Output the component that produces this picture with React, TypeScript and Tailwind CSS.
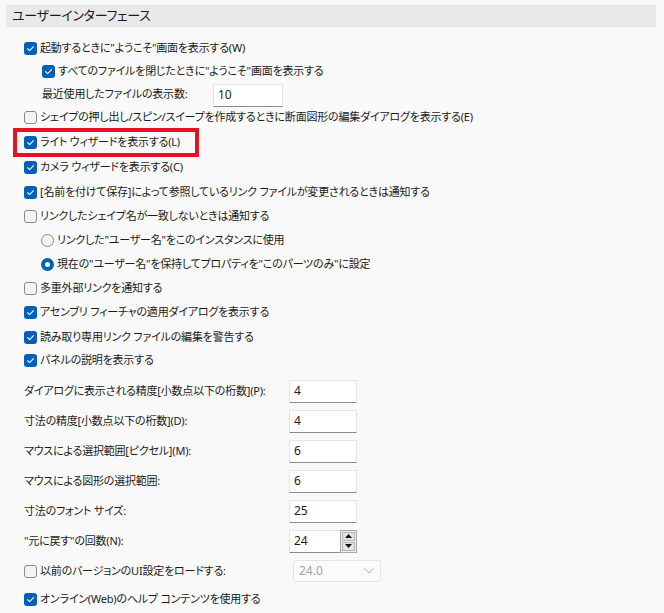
import { FC, ReactNode } from "react";

const FONT =
  "font-['Noto_Sans','Noto_Sans_CJK_JP',sans-serif] [font-feature-settings:'palt']";

type TBoxProps = { checked?: boolean };

const CheckBox: FC<TBoxProps> = ({ checked }) =>
  checked ? (
    <span className="flex h-[13px] w-[13px] shrink-0 items-center justify-center rounded-[3px] bg-[#005fb8]">
      <svg width="13" height="13" viewBox="0 0 13 13" fill="none">
        <path
          d="M3.6 6.7 L5.6 8.7 L9.5 4.6"
          stroke="white"
          strokeWidth="1.1"
          strokeLinecap="round"
          strokeLinejoin="round"
        />
      </svg>
    </span>
  ) : (
    <span className="h-[13px] w-[13px] shrink-0 rounded-[3px] border border-[#8a8a8a] bg-[#f4f4f4]" />
  );

const Radio: FC<TBoxProps> = ({ checked }) =>
  checked ? (
    <span className="flex h-[13px] w-[13px] shrink-0 items-center justify-center rounded-full bg-[#005fb8]">
      <span className="h-[5px] w-[5px] rounded-full bg-white" />
    </span>
  ) : (
    <span className="h-[13px] w-[13px] shrink-0 rounded-full border border-[#8a8a8a] bg-[#f4f4f4]" />
  );

type TRowProps = {
  h: string;
  pl: string;
  children: ReactNode;
};
const Row: FC<TRowProps> = ({ h, pl, children }) => (
  <div className={`relative flex items-center ${h} ${pl}`}>{children}</div>
);

const Check: FC<{ checked?: boolean; label: string }> = ({ checked, label }) => (
  <div className="flex items-center gap-[3px]">
    <CheckBox checked={checked} />
    <span className="whitespace-nowrap">{label}</span>
  </div>
);

const Option: FC<{ checked?: boolean; label: string }> = ({ checked, label }) => (
  <div className="flex items-center gap-[3px]">
    <Radio checked={checked} />
    <span className="whitespace-nowrap">{label}</span>
  </div>
);

const TextBox: FC<{ value: string; w: string }> = ({ value, w }) => (
  <div
    className={`flex h-[23px] ${w} items-center border border-[#e5e5e5] border-b-[#8c8c8c] bg-white pl-[4px] text-[12px] tracking-normal text-[#1b1b1b]`}
  >
    {value}
  </div>
);

const Spinner: FC<{ value: string }> = ({ value }) => (
  <div className="flex h-[23px]">
    <div className="flex h-[23px] w-[51px] items-center border border-r-0 border-[#e5e5e5] border-b-[#8c8c8c] bg-white pl-[4px] text-[12px] tracking-normal">
      {value}
    </div>
    <div className="flex w-[17px] flex-col gap-[1px] border border-[#a8a8a8] bg-[#f0f0f0] p-[1px]">
      <div className="flex flex-1 items-center justify-center border border-[#b4b4b4] bg-[#e3e3e3]">
        <svg width="7" height="4" viewBox="0 0 7 4">
          <path d="M0 4 L3.5 0 L7 4 Z" fill="#111" />
        </svg>
      </div>
      <div className="flex flex-1 items-center justify-center border border-[#b4b4b4] bg-[#e3e3e3]">
        <svg width="7" height="4" viewBox="0 0 7 4">
          <path d="M0 0 L3.5 4 L7 0 Z" fill="#111" />
        </svg>
      </div>
    </div>
  </div>
);

const numericRows = [
  { label: "ダイアログに表示される精度[小数点以下の桁数](P):", value: "4" },
  { label: "寸法の精度[小数点以下の桁数](D):", value: "4" },
  { label: "マウスによる選択範囲[ピクセル](M):", value: "6" },
  { label: "マウスによる図形の選択範囲:", value: "6" },
  { label: "寸法のフォント サイズ:", value: "25" },
];

export default function App() {
  return (
    <div
      className={`h-[613px] w-[664px] overflow-hidden bg-[#f9f9f9] pl-[6px] pt-[5px] text-[11px] tracking-[-0.2px] text-[#1b1b1b] ${FONT}`}
    >
      <div className="flex h-[22px] w-[650px] items-center bg-[#e9e9e9] pl-[6px] text-[13px] tracking-[-0.3px]">
        ユーザーインターフェース
      </div>
      <div className="mt-[10px] flex flex-col">
        <Row h="h-[23px]" pl="pl-[18px]">
          <Check checked label={'起動するときに"ようこそ"画面を表示する(W)'} />
        </Row>
        <Row h="h-[22px]" pl="pl-[36px]">
          <Check checked label={'すべてのファイルを閉じたときに"ようこそ"画面を表示する'} />
        </Row>
        <Row h="h-[24px]" pl="pl-[36px]">
          <span className="w-[171px] whitespace-nowrap">最近使用したファイルの表示数:</span>
          <div className="mt-[2px]">
            <TextBox value="10" w="w-[70px]" />
          </div>
        </Row>
        <Row h="h-[23px]" pl="pl-[18px]">
          <Check label="シェイプの押し出し/スピン/スイープを作成するときに断面図形の編集ダイアログを表示する(E)" />
        </Row>
        <Row h="h-[26px]" pl="pl-[18px]">
          <Check checked label="ライト ウィザードを表示する(L)" />
          <div className="absolute left-[7px] top-[-1px] h-[29px] w-[186px] border-[4px] border-[#e81123]" />
        </Row>
        <Row h="h-[25px]" pl="pl-[18px]">
          <Check checked label="カメラ ウィザードを表示する(C)" />
        </Row>
        <Row h="h-[24px]" pl="pl-[18px]">
          <Check
            checked
            label="[名前を付けて保存]によって参照しているリンク ファイルが変更されるときは通知する"
          />
        </Row>
        <Row h="h-[24px]" pl="pl-[18px]">
          <Check label="リンクしたシェイプ名が一致しないときは通知する" />
        </Row>
        <Row h="h-[24px]" pl="pl-[35px]">
          <Option label={'リンクした"ユーザー名"をこのインスタンスに使用'} />
        </Row>
        <Row h="h-[24px]" pl="pl-[35px]">
          <Option checked label={'現在の"ユーザー名"を保持してプロパティを"このパーツのみ"に設定'} />
        </Row>
        <Row h="h-[24px]" pl="pl-[18px]">
          <Check label="多重外部リンクを通知する" />
        </Row>
        <Row h="h-[25px]" pl="pl-[18px]">
          <Check checked label="アセンブリ フィーチャの適用ダイアログを表示する" />
        </Row>
        <Row h="h-[24px]" pl="pl-[18px]">
          <Check checked label="読み取り専用リンク ファイルの編集を警告する" />
        </Row>
        <Row h="h-[23px]" pl="pl-[18px]">
          <Check checked label="パネルの説明を表示する" />
        </Row>
        <div className="h-[4px]" />
        {numericRows.map((r) => (
          <Row key={r.label} h="h-[30px]" pl="pl-[18px]">
            <span className="w-[265px] whitespace-nowrap">{r.label}</span>
            <TextBox value={r.value} w="w-[68px]" />
          </Row>
        ))}
        <Row h="h-[30px]" pl="pl-[18px]">
          <span className="w-[265px] whitespace-nowrap">"元に戻す"の回数(N):</span>
          <Spinner value="24" />
        </Row>
        <Row h="h-[30px]" pl="pl-[18px]">
          <div className="w-[269px]">
            <Check label="以前のバージョンのUI設定をロードする:" />
          </div>
          <div className="flex h-[22px] w-[88px] items-center justify-between rounded-[3px] border border-[#e5e5e5] bg-[#fbfbfb] pl-[5px] pr-[6px] text-[12px] tracking-normal text-[#a3a3a3]">
            <span>24.0</span>
            <svg width="10" height="6" viewBox="0 0 10 6" fill="none">
              <path d="M0.5 0.5 L5 5 L9.5 0.5" stroke="#b0b0b0" strokeWidth="1" />
            </svg>
          </div>
        </Row>
        <Row h="h-[26px]" pl="pl-[18px]">
          <Check checked label="オンライン(Web)のヘルプ コンテンツを使用する" />
        </Row>
      </div>
    </div>
  );
}
